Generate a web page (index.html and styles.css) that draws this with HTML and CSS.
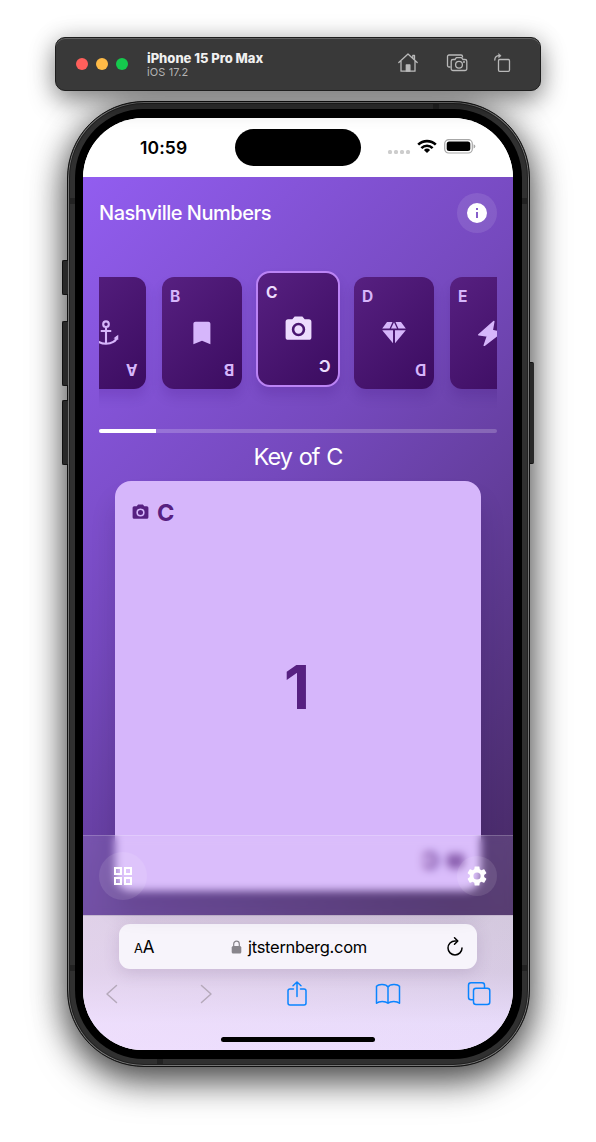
FILE: index.html
```
<!DOCTYPE html>
<html lang="en">
<head>
<meta charset="utf-8">
<title>Nashville Numbers</title>
<link rel="stylesheet" href="styles.css">
</head>
<body>
<svg width="0" height="0" class="defs">
  <symbol id="camera" viewBox="0 0 24 24"><path fill="currentColor" fill-rule="evenodd" d="M9 2 7.200 4H4a2 2 0 0 0-2 2v12a2 2 0 0 0 2 2h16a2 2 0 0 0 2-2V6a2 2 0 0 0-2-2h-3.200L15 2zm3 4.800a5.200 5.200 0 1 1 0 10.400a5.200 5.200 0 0 1 0-10.400zm0 2a3.200 3.200 0 1 0 0 6.400a3.200 3.200 0 0 0 0-6.400z"/></symbol>
</svg>
<div class="toolbar">
  <div class="lights"><i class="red"></i><i class="amber"></i><i class="green"></i></div>
  <div class="device-name"><b>iPhone 15 Pro Max</b><span>iOS 17.2</span></div>
  <div class="tools">
    <svg width="22" height="22" viewBox="0 0 22 22" fill="none" stroke="#b9b9b9" stroke-width="1.300" stroke-linejoin="round" stroke-linecap="round"><path d="M1.800 10.500 11 2l9.200 8.500M4 9v10.200h14V9M15.800 5.500V3.400h1.700v4.300"/><path d="M9.300 19v-6h3.600v6z" fill="#b9b9b9"/></svg>
    <svg width="22" height="22" viewBox="0 0 22 22" fill="none" stroke="#b9b9b9" stroke-width="1.300" stroke-linejoin="round"><path d="M4.500 15H3a1.500 1.500 0 0 1-1.500-1.500v-9A1.500 1.500 0 0 1 3 3h12a1.500 1.500 0 0 1 1.500 1.500v1"/><path d="M7 7.500h2l1.300-1.800h5.200L17 7.500h2a1.800 1.800 0 0 1 1.800 1.800v7.400a1.800 1.800 0 0 1-1.800 1.800H7a1.800 1.800 0 0 1-1.800-1.800V9.300A1.800 1.800 0 0 1 7 7.500z"/><circle cx="13" cy="12.800" r="3.400"/><circle cx="18" cy="10" r=".4"/></svg>
    <svg width="22" height="22" viewBox="0 0 22 22" fill="none" stroke="#b9b9b9" stroke-width="1.300" stroke-linecap="round"><rect x="6.500" y="7.500" width="11" height="11.800" rx="1.200"/><path d="M2.800 8C2.600 5 4.500 3.600 7.600 3.700"/><path d="m6.800 1.700 2.400 2-2.400 2z" fill="#b9b9b9" stroke-width=".5"/></svg>
  </div>
</div>

<div class="phone">
  <span class="key action"></span><span class="key up"></span><span class="key down"></span><span class="key power"></span>
  <span class="band top"></span><span class="band bottom"></span>
  <span class="band side left high"></span><span class="band side left low"></span><span class="band side right high"></span><span class="band side right low"></span>
  <div class="bezel">
  <div class="screen">
    <div class="status">
      <span class="time">10:59</span>
      <span class="island"></span>
      <div class="signals">
        <span class="dots"><i></i><i></i><i></i><i></i></span>
        <svg width="20" height="15" viewBox="0 0 20 15" fill="none" stroke="#000" stroke-width="2.600"><path d="M1.200 5.600a12.800 12.800 0 0 1 17.600 0"/><path d="M4.400 9.100a8 8 0 0 1 11.200 0"/><path d="M10 14 6.900 11a4.500 4.500 0 0 1 6.200 0z" fill="#000" stroke="none"/></svg>
        <svg width="32" height="15" viewBox="0 0 32 15"><rect x=".7" y=".7" width="27.600" height="13.300" rx="4" fill="none" stroke="#a7a7a7" stroke-width="1.200"/><rect x="2.700" y="2.600" width="23.600" height="9.500" rx="2.500"/><path d="M29.600 5.200q2 1 1.800 2.200t-1.800 2.200z" fill="#a7a7a7"/></svg>
      </div>
    </div>

    <main class="app">
      <header class="app-head">
        <h1>Nashville Numbers</h1>
        <button class="round"><svg width="24" height="24" viewBox="0 0 24 24"><path fill="#fff" fill-rule="evenodd" d="M12 2a10 10 0 1 0 0 20a10 10 0 0 0 0-20zm-1 5h2v2h-2zm0 4h2v6h-2z"/></svg></button>
      </header>
      <div class="carousel">
        <div class="tile"><span></span><svg width="28" height="28" viewBox="0 0 24 24" fill="none" stroke="currentColor" stroke-width="1.800"><circle cx="12" cy="4.400" r="2.400"/><path d="M12 7v14.500M7.500 10.300h9"/><path d="M2.500 14.800c1 8.600 18 8.600 19 0"/><path d="M1.500 18v-4.500l4 3zM22.500 18v-4.500l-4 3z" fill="currentColor" stroke="none"/></svg><b class="flip">A</b></div>
        <div class="tile"><b>B</b><svg width="28" height="28" viewBox="0 0 24 24"><path fill="currentColor" d="M6.500 2.300h11c.8 0 1.700.8 1.700 1.700v17.700L12 18.600l-7.400 3.100V4c0-.9.800-1.700 1.900-1.700z"/></svg><b class="flip">B</b></div>
        <div class="tile active"><b>C</b><svg width="31" height="31"><use href="#camera"/></svg><b class="flip">C</b></div>
        <div class="tile"><b>D</b><svg width="28" height="28" viewBox="0 0 28 28"><g fill="currentColor"><path d="M7 3h5.500L9.600 9.500H2.200zM15.500 3H21l4.800 6.500h-7.400zM14 3.300l3 6.200h-6zM2.200 11.300H13v13zM25.800 11.300H15v13z"/></g></svg><b class="flip">D</b></div>
        <div class="tile"><b>E</b><svg width="28" height="28" viewBox="0 0 28 28"><path fill="currentColor" stroke="currentColor" stroke-width="1.500" stroke-linejoin="round" d="M17.800 2.500 2.800 15.700l8.700 1.200L8.300 26.300 25.200 13.200l-9-1.600z"/></svg></div>
      </div>
      <div class="progress"><span></span></div>
      <h2>Key of C</h2>
      <section class="card">
        <div class="corner"><svg width="19" height="19"><use href="#camera"/></svg><b>C</b></div>
        <strong>1</strong>
        <div class="corner flip"><svg width="19" height="19"><use href="#camera"/></svg><b>C</b></div>
      </section>
      <nav class="dock">
        <button class="round large"><svg width="24" height="24" viewBox="0 0 24 24" fill="none" stroke="#fff" stroke-width="2"><path d="M4 4h6v6H4zM14 4h6v6h-6zM4 14h6v6H4zM14 14h6v6h-6z"/></svg></button>
        <button class="round"><svg width="24" height="24" viewBox="0 0 24 24"><path fill="#fff" d="M19.140 12.940c.04-.3.060-.61.060-.94 0-.32-.02-.64-.07-.94l2.030-1.580c.18-.14.230-.41.120-.61l-1.920-3.320c-.12-.22-.37-.29-.59-.22l-2.390.96c-.5-.38-1.030-.7-1.620-.94l-.36-2.540c-.04-.24-.24-.41-.48-.41h-3.840c-.24 0-.43.170-.47.410l-.36 2.540c-.59.240-1.130.57-1.620.94l-2.390-.96c-.22-.08-.47 0-.59.220L2.740 8.870c-.12.210-.08.470.12.610l2.030 1.580c-.05.300-.09.630-.09.940s.02.640.07.940l-2.030 1.580c-.18.140-.23.410-.12.610l1.920 3.320c.12.220.37.290.59.220l2.390-.96c.5.380 1.030.7 1.620.94l.36 2.540c.05.240.24.410.48.410h3.840c.24 0 .44-.17.470-.41l.36-2.540c.59-.24 1.130-.56 1.620-.94l2.390.96c.22.080.47 0 .59-.22l1.920-3.320c.12-.22.070-.47-.12-.61l-2.010-1.580zM12 15.600A3.600 3.600 0 1 1 12 8.400a3.600 3.600 0 0 1 0 7.200z"/></svg></button>
      </nav>
    </main>

    <footer class="browser">
      <div class="address">
        <span class="aa"><small>A</small>A</span>
        <span class="url"><svg width="11" height="14" viewBox="0 0 11 14"><rect x=".7" y="6" width="9.600" height="7.500" rx="1.500" fill="#88858c"/><path d="M2.700 6.500V4a2.800 2.800 0 0 1 5.600 0v2.500" fill="none" stroke="#88858c" stroke-width="1.200"/></svg>jtsternberg.com</span>
        <svg width="20" height="22" viewBox="0 0 20 22" fill="none" stroke="#000" stroke-width="1.500" stroke-linecap="round" stroke-linejoin="round"><path d="M11.500 4.900H10a7 7 0 1 0 7 7"/><path d="m9.500 1.700 3.300 3.300-3.300 3.300"/></svg>
      </div>
      <div class="actions">
        <svg width="26" height="28" viewBox="0 0 26 28" fill="none" stroke="#b5a9ba" stroke-width="1.500" stroke-linecap="round" stroke-linejoin="round"><path d="M17.500 5.500 8 14l9.500 8.500"/></svg>
        <svg width="26" height="28" viewBox="0 0 26 28" fill="none" stroke="#b5a9ba" stroke-width="1.500" stroke-linecap="round" stroke-linejoin="round"><path d="m9.500 5.500 9.500 8.500-9.500 8.500"/></svg>
        <svg width="26" height="28" viewBox="0 0 26 28" fill="none" stroke="#0a84ff" stroke-width="1.500" stroke-linecap="round" stroke-linejoin="round"><path d="M9.500 9H6a2 2 0 0 0-2 2v12a2 2 0 0 0 2 2h14a2 2 0 0 0 2-2V11a2 2 0 0 0-2-2h-3.500M13 16.500V2M9 5.800 13 2l4 3.800"/></svg>
        <svg width="26" height="28" viewBox="0 0 26 28" fill="none" stroke="#0a84ff" stroke-width="1.500" stroke-linejoin="round"><path d="M13 7C11 3.800 3.500 3.800 1.500 6.300v17c2.500-2.500 9-2.500 11.500 0 2.500-2.500 9-2.500 11.500 0v-17C22.500 3.800 15 3.800 13 7zv16"/></svg>
        <svg width="26" height="28" viewBox="0 0 26 28" fill="none" stroke="#0a84ff" stroke-width="1.500" stroke-linejoin="round"><rect x="7.500" y="8.300" width="16.300" height="16.300" rx="2.500"/><path d="M7.500 19.800H5a2.500 2.500 0 0 1-2.500-2.500v-12A2.500 2.500 0 0 1 5 2.800h11a2.500 2.500 0 0 1 2.500 2.500v3"/></svg>
      </div>
      <span class="home"></span>
    </footer>
  </div>
  </div>
</div>
</body>
</html>
```
FILE: styles.css
```
* { box-sizing: border-box; }
body { margin: 0; width: 596px; height: 1142px; overflow: hidden; background: #fff; padding-top: 37px; font-family: Inter, "Liberation Sans", sans-serif; }
.defs { position: absolute; }
svg { display: block; flex: none; }
h1, h2 { margin: 0; }
button { border: 0; padding: 0; }

.toolbar { position: relative; z-index: 2; width: 486px; height: 54px; margin-left: 55px; padding: 0 26px 0 20px; display: flex; align-items: center; background: #393939; border: 1px solid #1e1e1e; border-radius: 10px; box-shadow: inset 0 1px 0 #626262, 0 10px 26px rgba(0,0,0,.42), 0 0 24px rgba(0,0,0,.15); }
.lights { display: flex; gap: 8px; }
.lights i { width: 12px; height: 12px; border-radius: 50%; }
.red { background: #ff5f5b; }
.amber { background: #ffbb47; }
.green { background: #15c94d; }
.device-name { display: flex; flex-direction: column; margin: 1px 0 0 19px; color: #f0f0f0; }
.device-name b { font-size: 13px; line-height: 15px; font-weight: 800; letter-spacing: -.02px; }
.device-name span { font-size: 11px; line-height: 13px; color: #b4b4b4; letter-spacing: .1px; }
.tools { display: flex; margin: -2px 0 0 auto; }
.tools svg:nth-child(1) { margin-right: 27px; }
.tools svg:nth-child(2) { margin-right: 24px; }

.phone { position: relative; width: 463px; height: 966px; margin: 10px 0 0 67px; padding: 7px; border-radius: 77px; background: #303030; border: 1px solid #111; box-shadow: inset 0 0 0 1px #757575, inset 0 0 0 2px #202020, 0 14px 36px rgba(0,0,0,.62), 0 4px 34px rgba(0,0,0,.34); }
.bezel { height: 100%; border-radius: 69px; background: #000; padding: 9px 8px 8px; }
.screen { position: relative; width: 430px; height: 932px; border-radius: 60px; overflow: hidden; background: #fff; display: flex; flex-direction: column; }
.key { position: absolute; left: -6px; width: 6px; background: #292929; border: 1px solid #111; border-right: 0; border-radius: 2px 0 0 2px; }
.action { top: 158px; height: 35px; }
.up { top: 219px; height: 65px; }
.down { top: 298px; height: 65px; }
.power { left: auto; right: -5px; width: 5px; top: 260px; height: 102px; border-radius: 0 2px 2px 0; }
.band { position: absolute; width: 6px; height: 5px; background: #222; }
.band.top { top: 2px; left: 365px; }
.band.bottom { bottom: 2px; left: 89px; }
.band.side { width: 5px; height: 6px; }
.band.left { left: 2px; }
.band.right { right: 2px; }
.band.high { top: 96px; }
.band.low { bottom: 95px; }

.status { height: 59px; flex: none; background: #fff; display: grid; grid-template-columns: 152px 126px 152px; align-items: center; }
.time { font-size: 17.500px; font-weight: 600; padding-left: 57px; letter-spacing: .1px; }
.island { height: 37px; border-radius: 19px; background: #000; }
.signals { display: flex; align-items: center; padding-left: 27px; margin-top: -2px; }
.dots { display: flex; gap: 2px; margin: 10px 7px 0 0; }
.dots i { width: 4px; height: 4px; border-radius: 1.500px; background: #cdcdcd; }
.signals svg + svg { margin-left: 7px; }

.app { position: relative; height: 738px; flex: none; padding: 16px; background: linear-gradient(135deg, #925df0 0%, #7549bd 42%, #5b388c 72%, #452861 100%); }
.app-head { height: 40px; display: flex; align-items: center; justify-content: space-between; color: #fff; }
.app-head h1 { font-size: 20px; font-weight: 500; letter-spacing: -.48px; }
.round { width: 40px; height: 40px; border-radius: 50%; background: rgba(255,255,255,.1); display: grid; place-items: center; }
.large { width: 48px; height: 48px; }

.carousel { margin-top: 32px; height: 148px; padding-top: 12px; overflow: hidden; display: flex; gap: 16px; }
.tile { flex: none; width: 80px; height: 112px; padding: 8px; border-radius: 12px; background: linear-gradient(135deg, #572081, #3b0c60); color: #d6b6fb; display: grid; grid-template-rows: 24px 1fr 24px; justify-items: center; align-items: center; box-shadow: 0 8px 12px rgba(50,10,100,.15); }
.tile:first-child { margin-left: -33px; }
.tile b { justify-self: start; font-size: 15.500px; line-height: 24px; font-weight: 700; }
.tile .flip { justify-self: end; transform: rotate(180deg); }
.tile.active { width: 84px; height: 116px; margin: -6px -2px 0; border: 2px solid #bb83f5; color: #ecdcfd; border-radius: 14px; }
.progress { height: 4px; margin-top: 16px; border-radius: 2px; background: rgba(255,255,255,.2); overflow: hidden; }
.progress span { display: block; width: 57px; height: 4px; background: #fff; }
.app h2 { margin-top: 8px; height: 32px; line-height: 32px; color: #fff; text-align: center; font-size: 23.500px; font-weight: 400; letter-spacing: -.95px; word-spacing: 1px; }
.card { margin: 8px 16px 0; height: 410px; border-radius: 16px; background: #d6b6fb; color: #572081; padding: 15px 16px; display: flex; flex-direction: column; justify-content: space-between; box-shadow: 0 20px 25px rgba(30,5,60,.16); }
.corner { display: flex; align-items: center; gap: 7px; height: 32px; font-size: 23.500px; }
.corner b { font-weight: 700; }
.corner.flip { transform: rotate(180deg); }
.corner.flip { margin-bottom: -1px; }
.card strong { text-align: center; font-size: 60px; line-height: 60px; padding-right: 2px; }
.dock { position: absolute; left: 0; right: 0; bottom: 0; height: 80px; padding: 0 16px; display: flex; justify-content: space-between; align-items: center; border-top: 1px solid rgba(255,255,255,.2); background: rgba(255,255,255,.1); backdrop-filter: blur(4px); }

.browser { height: 135px; flex: none; background: linear-gradient(100deg, rgba(245,225,255,.4), rgba(220,210,250,.1)), linear-gradient(#d2c7da 0, #d6c9e0 42%, #e9dcfa 80%, #ebddfc 100%); border-top: 1px solid #c5b8cf; padding: 8px 16px; }
.address { height: 45px; margin: 0 20px; border-radius: 11px; background: #f7f4fb; box-shadow: 0 4px 16px rgba(90,60,110,.17); display: flex; align-items: center; justify-content: space-between; padding: 0 12px 0 15px; font-size: 16.500px; }
.aa { font-size: 17px; width: 24px; letter-spacing: -.3px; }
.aa small { font-size: 13px; }
.url { display: flex; align-items: center; gap: 6px; letter-spacing: -.3px; margin-right: 5px; }
.actions { display: flex; justify-content: space-between; margin: 11px 5px 0 0; }
.actions svg:first-child { margin-right: 2px; }
.home { display: block; width: 154px; height: 5px; border-radius: 3px; background: #000; margin: 29px auto 0; }
```
